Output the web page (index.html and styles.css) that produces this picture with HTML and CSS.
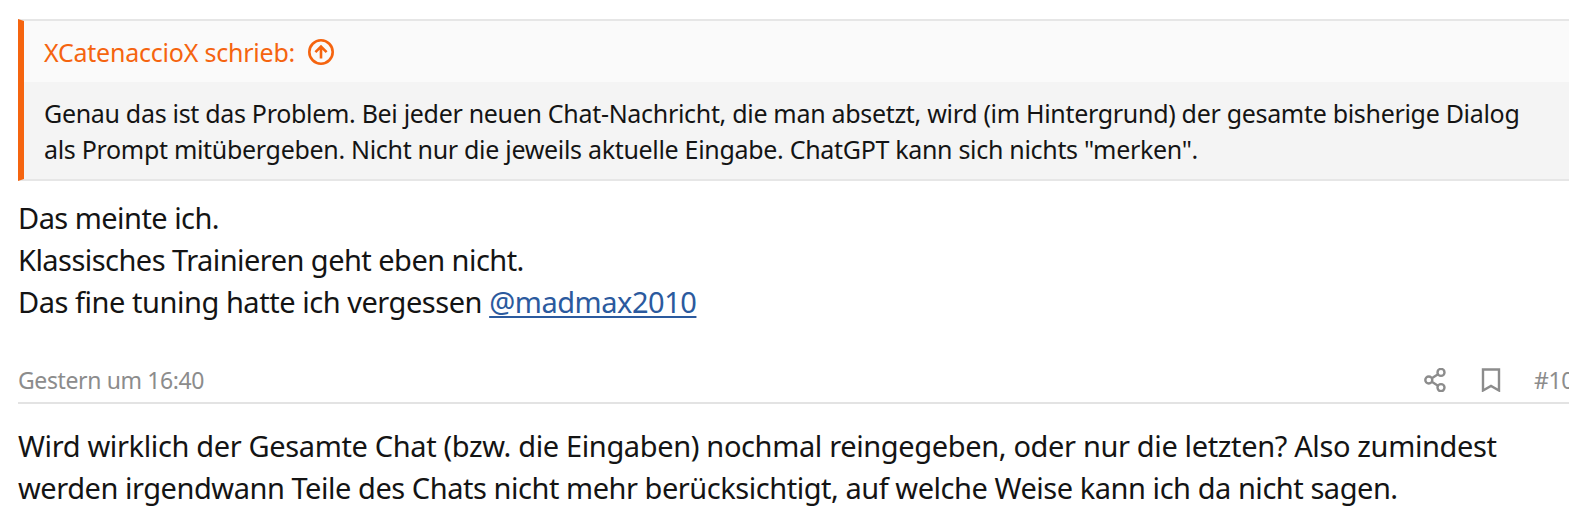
FILE: index.html
```html
<!DOCTYPE html>
<html lang="de">
<head>
<meta charset="UTF-8">
<meta name="viewport" content="width=device-width, initial-scale=1.0">
<title>Forum</title>
<link rel="stylesheet" href="styles.css">
</head>
<body>

<div class="thread">
    <article class="post">
        <blockquote class="quote">
            <div class="quote-title">
                <a class="line" href="#">XCatenaccioX schrieb:</a>
                <svg class="icon-up" viewBox="0 0 26 26" width="26" height="26">
                    <circle cx="13" cy="13" r="11.7"/>
                    <path d="M13 19.5V7.6M7.4 13.2L13 7.6l5.6 5.6"/>
                </svg>
            </div>
            <div class="quote-content">
                <div class="line">Genau das ist das Problem. Bei jeder neuen Chat-Nachricht, die man absetzt, wird (im Hintergrund) der gesamte bisherige Dialog</div>
                <div class="line">als Prompt mitübergeben. Nicht nur die jeweils aktuelle Eingabe. ChatGPT kann sich nichts "merken".</div>
            </div>
        </blockquote>
        <div class="text">
            <div class="line line-short">Das meinte ich.</div>
            <div class="line line-short">Klassisches Trainieren geht eben nicht.</div>
            <div class="line">Das fine tuning hatte ich vergessen <a href="#">@madmax2010</a></div>
        </div>
    </article>

    <article class="post">
        <header class="post-header">
            <time class="line">Gestern um 16:40</time>
            <div class="actions">
                <svg viewBox="0 0 22 24" width="22" height="24">
                    <circle cx="17" cy="4.4" r="3.5"/>
                    <circle cx="4.8" cy="12" r="3.5"/>
                    <circle cx="17" cy="19.6" r="3.5"/>
                    <path d="M7.8 10.2l6.2-3.9M7.8 13.8l6.2 3.9"/>
                </svg>
                <svg class="icon-bookmark" viewBox="0 0 20 24" width="20" height="24">
                    <path d="M2 1.5h16v21l-8-4.6-8 4.6z"/>
                </svg>
                <span class="number">#10</span>
            </div>
        </header>
        <div class="text">
            <div class="line line-wide">Wird wirklich der Gesamte Chat (bzw. die Eingaben) nochmal reingegeben, oder nur die letzten? Also zumindest</div>
            <div class="line">werden irgendwann Teile des Chats nicht mehr berücksichtigt, auf welche Weise kann ich da nicht sagen.</div>
        </div>
    </article>
</div>

</body>
</html>
```
FILE: styles.css
```css
body {
    margin: 0;
    overflow: hidden;
    background-color: #fff;
    color: #141414;
    font-family: "Noto Sans", "Open Sans", sans-serif;
}
.thread {
    padding: 19px 0 0 18px;
}
.line {
    white-space: nowrap;
}
.quote {
    margin: 0;
    border: 2px solid #e6e6e6;
    border-left: 6px solid #f5640f;
    border-right: none;
    background-color: #f4f4f4;
    font-size: 25px;
    line-height: 36px;
    letter-spacing: -0.31px;
}
.quote-title {
    display: flex;
    align-items: center;
    gap: 13px;
    height: 61px;
    padding-left: 20px;
    background-color: #fafafa;
}
.quote-title a {
    color: #f5640f;
    letter-spacing: -0.22px;
    text-decoration: none;
}
.icon-up {
    fill: none;
    stroke: #f5640f;
    stroke-width: 2.6;
}
.quote-content {
    padding: 13px 0 12px 20px;
}
.text {
    padding-top: 16px;
    font-size: 29px;
    line-height: 42px;
    letter-spacing: -0.46px;
}
.text .line-short {
    letter-spacing: -0.54px;
}
.text .line-wide {
    letter-spacing: -0.36px;
}
.text a {
    color: #2b5a9e;
    text-decoration-thickness: 2px;
    text-underline-offset: 3px;
}
.post-header {
    display: flex;
    justify-content: space-between;
    align-items: center;
    height: 44px;
    margin-top: 35px;
    border-bottom: 2px solid #e3e3e3;
    color: #8c8c8c;
    font-size: 23px;
    letter-spacing: -0.38px;
}
.post-header + .text {
    padding-top: 21px;
}
.actions {
    display: flex;
    align-items: center;
    gap: 34px;
    margin-right: -5px;
}
.actions svg {
    fill: none;
    stroke: #8c8c8c;
    stroke-width: 2.4;
}
.actions .icon-bookmark {
    margin: 0 -1px 0 1px;
}
```
